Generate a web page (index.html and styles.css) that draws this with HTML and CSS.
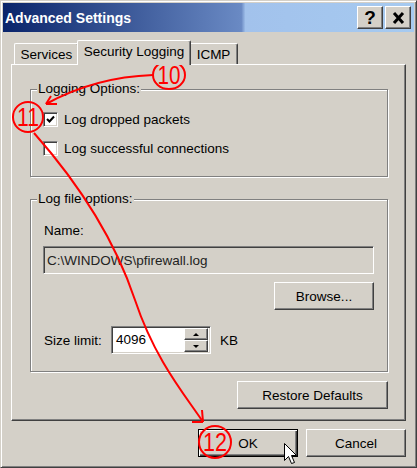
FILE: index.html
```html
<!DOCTYPE html>
<html>
  <head>
    <title>Advanced Settings</title>
    <link rel="stylesheet" href="styles.css">
  </head>
  <body>
    <div class="window">
      <div class="titlebar">
        <span class="title">Advanced Settings</span>
        <div class="caption-buttons">
          <div class="cap-btn help">?</div>
          <div class="cap-btn">
            <svg width="13" height="12" viewBox="0 0 13 12">
              <path d="M2 1 L11 11 M11 1 L2 11" stroke="#000" stroke-width="3" />
            </svg>
          </div>
        </div>
      </div>

      <div class="content">
        <div class="tabs">
          <div class="tab first">Services</div>
          <div class="tab active">Security Logging</div>
          <div class="tab last">ICMP</div>
        </div>

        <div class="panel">
          <div class="group logging">
            <span class="legend">Logging Options:</span>
            <label class="check-row">
              <span class="checkbox">
                <svg width="9" height="9" viewBox="0 0 9 9">
                  <path d="M1 4 L3.5 6.5 L8 1.5" fill="none" stroke="#000" stroke-width="2" />
                </svg>
              </span>
              Log dropped packets
            </label>
            <label class="check-row second">
              <span class="checkbox"></span>
              Log successful connections
            </label>
          </div>

          <div class="group logfile">
            <span class="legend">Log file options:</span>
            <div class="field-label">Name:</div>
            <div class="textbox disabled">C:\WINDOWS\pfirewall.log</div>
            <div class="browse-row">
              <div class="btn browse">Browse...</div>
            </div>
            <div class="size-row">
              <span class="size-label">Size limit:</span>
              <div class="spin">
                <div class="spin-value">4096</div>
                <div class="spin-buttons">
                  <div class="spin-btn"><span class="arrow-up"></span></div>
                  <div class="spin-btn"><span class="arrow-down"></span></div>
                </div>
              </div>
              <span class="unit">KB</span>
            </div>
          </div>

          <div class="restore-row">
            <div class="btn restore">Restore Defaults</div>
          </div>
        </div>

        <div class="dialog-buttons">
          <div class="btn default">OK</div>
          <div class="btn">Cancel</div>
        </div>
      </div>
    </div>

    <!-- red tutorial markers drawn over the dialog -->
    <svg class="annotations" width="417" height="468" viewBox="0 0 417 468">
      <g fill="none" stroke="#f00" stroke-width="2">
        <ellipse cx="169" cy="75" rx="16" ry="14" />
        <ellipse cx="28" cy="117" rx="15" ry="15" />
        <ellipse cx="215" cy="442" rx="16" ry="16" />
        <path d="M153 75 Q95 77 46 104" />
        <path d="M46 104 L51 96 M46 104 L57 104" />
        <path d="M34 133 C80 185 115 240 135 300 S185 395 203 422" />
        <path d="M203 422 L192 422 M203 422 L202 410" />
      </g>
      <g fill="#f00" font-family="Liberation Sans, Arial, sans-serif" font-size="25" text-anchor="middle">
        <text x="169" y="84" textLength="23" lengthAdjust="spacingAndGlyphs">10</text>
        <text x="28" y="126" textLength="22" lengthAdjust="spacingAndGlyphs">11</text>
        <text x="215" y="451" textLength="24" lengthAdjust="spacingAndGlyphs">12</text>
      </g>
      <path class="cursor" d="M284.5 443.5 L284.5 460.5 L288.5 456.5 L291.5 463.5 L294.5 462.5 L291.5 455.5 L296.5 455.5 Z" fill="#fff" stroke="#000" stroke-width="1" />
    </svg>
  </body>
</html>
```

FILE: styles.css
```css
body {
  margin: 0;
  width: 417px;
  height: 468px;
  position: relative;
  overflow: hidden;
  font-family: "Liberation Sans", Arial, sans-serif;
  font-size: 13.5px;
  color: #000;
  background: #d4d0c8;
}
.window {
  box-sizing: border-box;
  width: 417px;
  height: 468px;
  padding: 2px;
  border: 1px solid;
  border-color: #d4d0c8 #404040 #404040 #d4d0c8;
  box-shadow: inset 1px 1px #fff, inset -1px -1px #808080;
  background: #d4d0c8;
  display: flex;
  flex-direction: column;
  overflow: hidden;
}
.titlebar {
  height: 29px;
  flex: none;
  display: flex;
  align-items: center;
  padding: 0 3px 0 2px;
  background: linear-gradient(to right, #0a246a 0%, #6a8ac4 58%, #a2c2ec 59%, #a6caf0 100%);
}
.title {
  color: #fff;
  font-weight: bold;
  font-size: 14px;
}
.caption-buttons {
  margin-left: auto;
  display: flex;
  gap: 2px;
}
.cap-btn {
  box-sizing: border-box;
  width: 26px;
  height: 23px;
  display: flex;
  align-items: center;
  justify-content: center;
  background: #d4d0c8;
  border: 1px solid;
  border-color: #fff #404040 #404040 #fff;
  box-shadow: inset -1px -1px #808080;
}
.cap-btn.help {
  font-weight: bold;
  font-size: 19px;
  line-height: 1;
}
.content {
  flex: 1;
  padding: 8px 8px 0;
}
.tabs {
  height: 24px;
  display: flex;
  align-items: flex-end;
  padding-left: 3px;
}
.tab {
  box-sizing: border-box;
  height: 21px;
  display: flex;
  align-items: center;
  justify-content: center;
  border-top: 1px solid #fff;
  border-left: 1px solid #fff;
  border-right: 1px solid #404040;
  border-radius: 2px 2px 0 0;
  box-shadow: inset -1px 0 #808080;
  background: #d4d0c8;
}
.tab.first {
  width: 65px;
}
.tab.active {
  position: relative;
  z-index: 2;
  width: 114px;
  height: 25px;
  margin: 0 -2px -1px -2px;
  padding-bottom: 3px;
}
.tab.last {
  width: 49px;
}
.panel {
  box-sizing: border-box;
  width: 395px;
  height: 357px;
  padding: 24px 0 0 18px;
  border: 1px solid;
  border-color: #fff #404040 #404040 #fff;
  box-shadow: inset -1px -1px #808080;
}
.group {
  position: relative;
  box-sizing: border-box;
  width: 358px;
  border: 1px solid #808080;
  box-shadow: inset 1px 1px #fff, 1px 1px #fff;
  padding-left: 12px;
}
.legend {
  position: absolute;
  top: -9px;
  left: 6px;
  padding: 0 1px;
  line-height: 16px;
  background: #d4d0c8;
}
.logging {
  height: 88px;
  padding-top: 19px;
}
.check-row {
  height: 20px;
  display: flex;
  align-items: center;
  gap: 6px;
}
.check-row.second {
  margin-top: 9px;
}
.checkbox {
  box-sizing: border-box;
  width: 15px;
  height: 15px;
  display: flex;
  align-items: center;
  justify-content: center;
  background: #fff;
  border: 1px solid;
  border-color: #808080 #fff #fff #808080;
  box-shadow: inset 1px 1px #404040, inset -1px -1px #d4d0c8;
}
.logfile {
  height: 173px;
  margin-top: 22px;
  padding-top: 23px;
}
.field-label {
  line-height: 16px;
  padding-left: 1px;
}
.textbox {
  box-sizing: border-box;
  width: 331px;
  height: 28px;
  margin-top: 7px;
  padding: 0 3px;
  display: flex;
  align-items: center;
  border: 1px solid;
  border-color: #808080 #fff #fff #808080;
  box-shadow: inset 1px 1px #404040, inset -1px -1px #d4d0c8;
}
.textbox.disabled {
  background: #d4d0c8;
  color: #222;
}
.browse-row {
  width: 331px;
  margin-top: 8px;
  display: flex;
  justify-content: flex-end;
}
.btn {
  box-sizing: border-box;
  width: 100px;
  height: 28px;
  display: flex;
  align-items: center;
  justify-content: center;
  background: #d4d0c8;
  border: 1px solid;
  border-color: #fff #404040 #404040 #fff;
  box-shadow: inset -1px -1px #808080;
}
.btn.default {
  border: 1px solid #000;
  box-shadow: inset 1px 1px #fff, inset -1px -1px #404040, inset -2px -2px #808080;
}
.size-row {
  height: 28px;
  margin-top: 16px;
  display: flex;
  align-items: center;
}
.size-label {
  width: 67px;
  padding-left: 1px;
}
.spin {
  box-sizing: border-box;
  width: 100px;
  height: 28px;
  display: flex;
  background: #fff;
  border: 1px solid;
  border-color: #808080 #fff #fff #808080;
  box-shadow: inset 1px 1px #404040, inset -1px -1px #d4d0c8;
  padding: 1px;
}
.spin-value {
  flex: 1;
  padding: 4px 0 0 3px;
}
.spin-buttons {
  width: 24px;
  display: flex;
  flex-direction: column;
  margin-right: 1px;
}
.spin-btn {
  box-sizing: border-box;
  flex: 1;
  display: flex;
  align-items: center;
  justify-content: center;
  background: #d4d0c8;
  border: 1px solid;
  border-color: #fff #404040 #404040 #fff;
  box-shadow: inset -1px -1px #808080;
}
.arrow-up,
.arrow-down {
  width: 0;
  height: 0;
  border-left: 3px solid transparent;
  border-right: 3px solid transparent;
}
.arrow-up {
  border-bottom: 3px solid #000;
}
.arrow-down {
  border-top: 3px solid #000;
}
.unit {
  margin-left: 9px;
}
.restore-row {
  width: 358px;
  margin-top: 9px;
  display: flex;
  justify-content: flex-end;
}
.btn.restore {
  width: 151px;
}
.dialog-buttons {
  margin-top: 8px;
  display: flex;
  justify-content: flex-end;
  gap: 8px;
}
.annotations {
  position: absolute;
  top: 0;
  left: 0;
  pointer-events: none;
}
```
